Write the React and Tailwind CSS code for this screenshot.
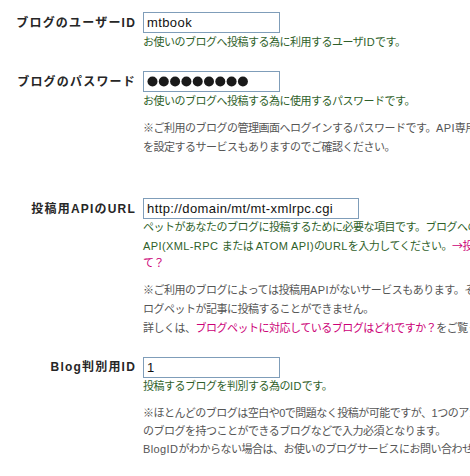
import React from 'react';

const jp = { fontFamily: '"Liberation Sans", "Noto Sans CJK JP", sans-serif' };

const Label = ({ children }) => (
  <div className="w-[136px] shrink-0 h-[21px] flex items-center justify-end text-[12px] font-bold text-[#262626] tracking-[1.2px] whitespace-nowrap">
    {children}
  </div>
);

const TextBox = ({ value, wide }) => (
  <input
    readOnly
    value={value}
    className={`block ${wide ? 'w-[216px]' : 'w-[137px]'} h-[21px] border border-[#7f9db9] bg-white px-[3px] text-[13px] tracking-[0.4px] text-[#111] outline-none`}
    style={{ fontFamily: '"Liberation Sans", sans-serif' }}
  />
);

const PasswordBox = () => (
  <div className="w-[137px] h-[21px] border border-[#7f9db9] bg-white pl-[3px] flex items-center">
    <svg width="104" height="11" viewBox="0 0 104 11">
      {Array.from({ length: 9 }).map((_, i) => (
        <circle key={i} cx={5.5 + i * 11.3} cy="5.5" r="5" fill="#1a1a1a" />
      ))}
    </svg>
  </div>
);

const Help = ({ children, leading = 'leading-[18px]' }) => (
  <div className={`text-[11px] tracking-[-0.5px] text-[#2f5f2a] whitespace-nowrap ${leading}`}>{children}</div>
);

const Note = ({ children, className = '' }) => (
  <div className={`text-[11px] tracking-[-0.5px] text-[#555] whitespace-nowrap ${className}`}>{children}</div>
);

const Pink = ({ children }) => <span className="text-[#cc0077]">{children}</span>;

const Lat = ({ children }) => <span className="tracking-[0.4px]">{children}</span>;

const Arrow = () => (
  <span style={{ fontFamily: '"Noto Sans CJK JP", sans-serif' }}>→</span>
);

const Field = ({ label, input, children, className = '' }) => (
  <div className={`flex ${className}`}>
    <Label>{label}</Label>
    <div className="ml-[7px]">
      {input}
      {children}
    </div>
  </div>
);

export default function App() {
  return (
    <div className="w-[470px] h-[476px] overflow-hidden bg-white pt-[12px]" style={jp}>
      <Field label="ブログのユーザーID" input={<TextBox value="mtbook" />}>
        <Help>
          お使いのブログへ投稿する為に利用するユーザ<Lat>ID</Lat>です。
        </Help>
      </Field>

      <Field label="ブログのパスワード" input={<PasswordBox />} className="mt-[20px]">
        <Help>お使いのブログへ投稿する為に使用するパスワードです。</Help>
        <Note className="mt-[9px] leading-[19px]">
          ※ご利用のブログの管理画面へログインするパスワードです。<Lat>API</Lat>専用のパスワード
          <br />
          を設定するサービスもありますのでご確認ください。
        </Note>
      </Field>

      <Field label="投稿用APIのURL" input={<TextBox value="http://domain/mt/mt-xmlrpc.cgi" wide />} className="mt-[41px]">
        <Help leading="leading-[17.5px]">
          ペットがあなたのブログに投稿するために必要な項目です。ブログへの投稿用
          <br />
          <Lat>API(XML-RPC </Lat>または <Lat>ATOM API)</Lat>の<Lat>URL</Lat>を入力してください。
          <Pink>
            <Arrow />投稿用APIについ
          </Pink>
          <br />
          <Pink>て？</Pink>
        </Help>
        <Note className="mt-[8px] leading-[19px]">
          ※ご利用のブログによっては投稿用<Lat>API</Lat>がないサービスもあります。その場合はブ
          <br />
          ログペットが記事に投稿することができません。
          <br />
          詳しくは、<Pink>ブログペットに対応しているブログはどれですか？</Pink>をご覧ください。
        </Note>
      </Field>

      <Field label="Blog判別用ID" input={<TextBox value="1" />} className="mt-[19px]">
        <Help leading="leading-[17px]">
          投稿するブログを判別する為の<Lat>ID</Lat>です。
        </Help>
        <Note className="mt-[9px] leading-[18px]">
          ※ほとんどのブログは空白や0で問題なく投稿が可能ですが、1つのアカウントで複数
          <br />
          のブログを持つことができるブログなどで入力必須となります。
          <br />
          <Lat>BlogID</Lat>がわからない場合は、お使いのブログサービスにお問い合わせください。
        </Note>
      </Field>
    </div>
  );
}
